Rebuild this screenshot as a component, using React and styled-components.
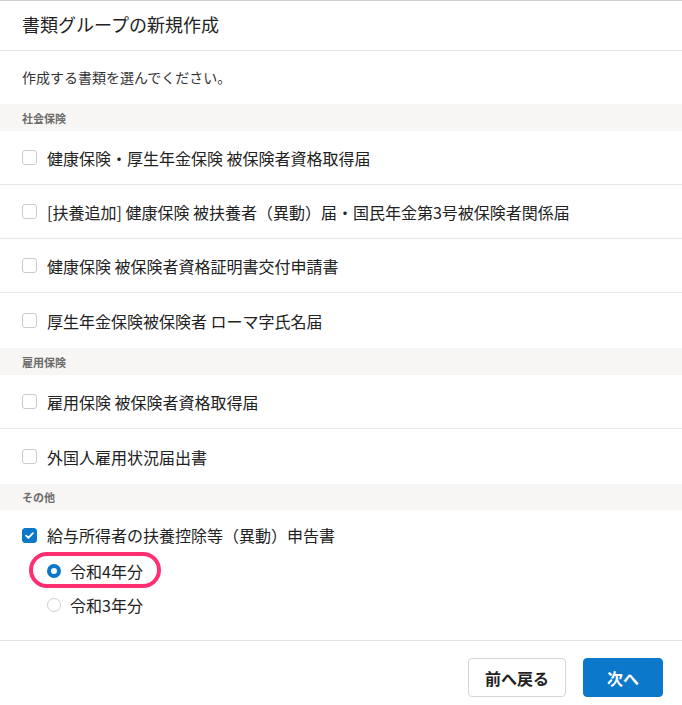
import React, {useState} from 'react';
import styled, {createGlobalStyle} from 'styled-components';

const Global = createGlobalStyle`
body{
  margin:0;
  background:#FFFFFF;
  font-family:"Noto Sans CJK JP", "Noto Sans", sans-serif;
  color:#222222;
}
`

const Modal = styled.div`
width:682px;
height:705px;
box-sizing:border-box;
border-top:1px solid #cfcfcf;
display:flex;
flex-direction:column;
background:#FFFFFF;
`
const Header = styled.div`
height:50px;
box-sizing:border-box;
display:flex;
align-items:center;
padding:0 22px 3px;
border-bottom:1px solid #e2e2e2;
`
const Title = styled.h1`
margin:0;
font-size:18px;
font-weight:400;
color:#222;
`
const Lead = styled.p`
margin:0;
height:53px;
display:flex;
align-items:center;
padding:0 22px 2px;
box-sizing:border-box;
font-size:14px;
color:#333;
`
const SectionHead = styled.div`
height:${p => p.short ? '26px' : '27px'};
display:flex;
align-items:center;
padding:0 22px;
background:#f7f6f4;
font-size:11px;
font-weight:700;
color:#6b6b6b;
`
const Row = styled.label`
height:${p => p.last ? '55px' : '54px'};
box-sizing:border-box;
display:flex;
align-items:center;
gap:10px;
padding:0 22px;
font-size:16px;
color:#222;
border-bottom:${p => p.last ? 'none' : '1px solid #e6e6e6'};
cursor:pointer;
`
const Box = styled.span`
width:15px;
height:15px;
flex-shrink:0;
box-sizing:border-box;
border-radius:3px;
border:1px solid ${p => p.checked ? '#0b78c9' : '#cbcbcb'};
background:${p => p.checked ? '#0b78c9' : '#fff'};
display:flex;
align-items:center;
justify-content:center;
`
const Group = styled.div`
padding:15px 22px 25px;
border-bottom:1px solid #e4e4e4;
`
const CheckLine = styled.label`
height:20px;
display:flex;
align-items:center;
gap:10px;
font-size:16px;
`
const RadioList = styled.div`
display:flex;
flex-direction:column;
gap:14px;
margin-top:16px;
padding-left:25px;
`
const RadioLine = styled.label`
position:relative;
height:20px;
display:flex;
align-items:center;
gap:9px;
font-size:16px;
`
const Dot = styled.span`
width:14px;
height:14px;
flex-shrink:0;
box-sizing:border-box;
border-radius:50%;
border:${p => p.checked ? '4.5px solid #0b78c9' : '1px solid #cfcfcf'};
background:#fff;
`
const Marker = styled.span`
position:absolute;
left:-18px;
top:-9px;
width:132px;
height:36px;
box-sizing:border-box;
border:4px solid #ff2f72;
border-radius:18px;
pointer-events:none;
`
const Footer = styled.div`
flex:1;
display:flex;
justify-content:flex-end;
align-items:flex-start;
gap:17px;
padding:17px 19px 0;
`
const Button = styled.button`
height:39px;
padding:0 ${p => p.primary ? '23px' : '16px'};
min-width:${p => p.primary ? '79px' : '96px'};
border-radius:4px;
border:1px solid ${p => p.primary ? '#0b78c9' : '#d6d6d6'};
background:${p => p.primary ? '#0b78c9' : '#fff'};
color:${p => p.primary ? '#fff' : '#222'};
font-family:inherit;
font-size:16px;
font-weight:700;
cursor:pointer;
`

const Check = ({checked}) => <Box checked={checked}>
    {checked && <svg width="11" height="11" viewBox="0 0 12 12">
        <path d="M2.3 6.2l2.5 2.5 4.9-5.2" fill="none" stroke="#fff" strokeWidth="2" strokeLinecap="round" strokeLinejoin="round"/>
    </svg>}
</Box>

const sections = [
    {title:'社会保険', items:[
        '健康保険・厚生年金保険 被保険者資格取得届',
        '[扶養追加] 健康保険 被扶養者（異動）届・国民年金第3号被保険者関係届',
        '健康保険 被保険者資格証明書交付申請書',
        '厚生年金保険被保険者 ローマ字氏名届',
    ]},
    {title:'雇用保険', items:[
        '雇用保険 被保険者資格取得届',
        '外国人雇用状況届出書',
    ]},
]

const App = () => {
    const [year, setYear] = useState('r4')

    return <>
        <Global/>
        <Modal>
            <Header><Title>書類グループの新規作成</Title></Header>
            <Lead>作成する書類を選んでください。</Lead>
            {sections.map(s => <div key={s.title}>
                <SectionHead>{s.title}</SectionHead>
                {s.items.map((item, i) => <Row key={item} last={i === s.items.length - 1}>
                    <Check checked={false}/>
                    {item}
                </Row>)}
            </div>)}
            <SectionHead short>その他</SectionHead>
            <Group>
                <CheckLine><Check checked/>給与所得者の扶養控除等（異動）申告書</CheckLine>
                <RadioList>
                    <RadioLine onClick={() => setYear('r4')}>
                        <Dot checked={year === 'r4'}/>令和4年分
                        <Marker/>
                    </RadioLine>
                    <RadioLine onClick={() => setYear('r3')}>
                        <Dot checked={year === 'r3'}/>令和3年分
                    </RadioLine>
                </RadioList>
            </Group>
            <Footer>
                <Button>前へ戻る</Button>
                <Button primary>次へ</Button>
            </Footer>
        </Modal>
    </>
}

export default App;
